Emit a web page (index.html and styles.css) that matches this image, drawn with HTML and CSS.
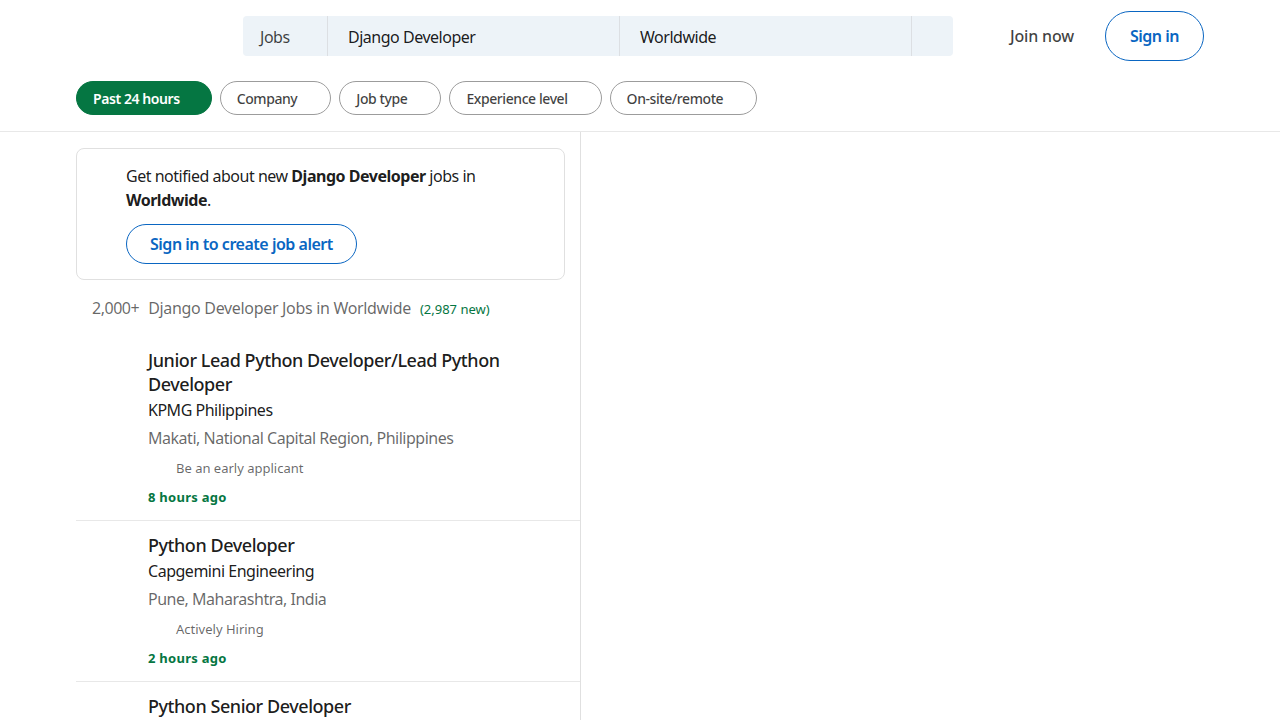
FILE: index.html
```html
<!DOCTYPE html>
<html lang="en">
<head>
<meta charset="utf-8">
<title>Django Developer Jobs in Worldwide</title>
<link rel="stylesheet" href="styles.css">
</head>
<body>
<header class="header">
  <div class="container top-row">
    <div class="search">
      <div class="search-seg seg-jobs">Jobs</div>
      <div class="search-seg seg-keyword">Django Developer</div>
      <div class="search-seg seg-location">Worldwide</div>
      <div class="search-seg seg-btn"></div>
    </div>
    <nav class="nav">
      <a class="join" href="#">Join now</a>
      <a class="signin" href="#">Sign in</a>
    </nav>
  </div>
  <div class="container filters">
    <button class="pill pill-active">Past 24 hours<span class="caret"></span></button>
    <button class="pill">Company<span class="caret"></span></button>
    <button class="pill">Job type<span class="caret"></span></button>
    <button class="pill">Experience level<span class="caret"></span></button>
    <button class="pill">On-site/remote<span class="caret"></span></button>
  </div>
</header>
<main class="container main">
  <section class="list">
    <div class="alert">
      <p class="alert-text">Get notified about new <strong>Django Developer</strong> jobs in <strong>Worldwide</strong>.</p>
      <button class="alert-btn">Sign in to create job alert</button>
    </div>
    <h1 class="results"><span class="count">2,000+</span><span class="results-title">Django Developer Jobs in Worldwide</span><span class="new">(2,987 new)</span></h1>
    <ul class="jobs">
      <li class="job">
        <div class="logo"></div>
        <div class="job-info">
          <h3 class="job-title">Junior Lead Python Developer/Lead Python Developer</h3>
          <h4 class="company">KPMG Philippines</h4>
          <div class="location">Makati, National Capital Region, Philippines</div>
          <div class="insight"><span class="insight-icon"></span>Be an early applicant</div>
          <div class="time">8 hours ago</div>
        </div>
      </li>
      <li class="job">
        <div class="logo"></div>
        <div class="job-info">
          <h3 class="job-title">Python Developer</h3>
          <h4 class="company">Capgemini Engineering</h4>
          <div class="location">Pune, Maharashtra, India</div>
          <div class="insight"><span class="insight-icon"></span>Actively Hiring</div>
          <div class="time">2 hours ago</div>
        </div>
      </li>
      <li class="job">
        <div class="logo"></div>
        <div class="job-info">
          <h3 class="job-title">Python Senior Developer</h3>
        </div>
      </li>
    </ul>
  </section>
  <section class="detail"></section>
</main>
</body>
</html>
```
FILE: styles.css
```css
* { box-sizing: border-box; letter-spacing: -0.03em; }
html, body { margin: 0; padding: 0; background: #fff; }
body {
  font-family: "Noto Sans", "Open Sans", Lato, "Liberation Sans", sans-serif;
  color: rgba(0,0,0,0.9);
  overflow: hidden;
  height: 720px;
}
.container { width: 1128px; margin: 0 auto; }
.header { border-bottom: 1px solid #e8e8e8; }
.top-row { height: 72px; display: flex; align-items: center; }
.search {
  margin-left: 167px;
  width: 710px;
  height: 40px;
  display: flex;
  background: #edf3f8;
  border-radius: 4px;
}
.search-seg {
  height: 40px;
  display: flex;
  align-items: center;
  padding-top: 1px;
  font-size: 16px;
  color: rgba(0,0,0,0.9);
  border-right: 1px solid #dcdfe3;
}
.seg-jobs { width: 85px; padding-left: 17px; color: rgba(0,0,0,0.75); }
.seg-keyword { width: 292px; padding-left: 20px; }
.seg-location { width: 292px; padding-left: 20px; }
.seg-btn { width: 41px; border-right: none; }
.nav { margin-left: auto; display: flex; align-items: center; }
.join {
  font-size: 16px;
  font-weight: 500;
  color: rgba(0,0,0,0.75);
  text-decoration: none;
  padding: 12px 31px 12px 24px;
  letter-spacing: -0.01em;
}
.signin {
  width: 99px;
  height: 50px;
  border: 1px solid #0a66c2;
  border-radius: 25px;
  display: flex;
  align-items: center;
  justify-content: center;
  color: #0a66c2;
  font-size: 16px;
  font-weight: 600;
  text-decoration: none;
}
.filters { display: flex; gap: 8px; padding: 9px 0 16px; }
.pill {
  height: 34px;
  border: 1px solid #9c9c9c;
  border-radius: 17px;
  background: #fff;
  font-family: inherit;
  font-size: 14px;
  font-weight: 500;
  color: rgba(0,0,0,0.75);
  padding: 0 16px 0 16px;
  display: flex;
  align-items: center;
}
.caret { display: inline-block; width: 17px; }
.pill-active { background: #057642; border-color: #057642; color: #fff; font-weight: 600; }
.pill-active .caret { width: 15px; }
.main { display: flex; }
.list { width: 505px; border-right: 1px solid #e0e0e0; padding-top: 16px; min-height: 600px; }
.alert {
  width: 489px;
  border: 1px solid #e0e0e0;
  border-radius: 8px;
  padding: 15px 24px 15px 49px;
}
.alert-text { margin: 0; font-size: 16px; line-height: 24px; color: rgba(0,0,0,0.9); }
.alert-text strong { font-weight: 700; }
.alert-btn {
  margin-top: 12px;
  height: 40px;
  padding: 0 23px;
  border: 1px solid #0a66c2;
  border-radius: 20px;
  background: #fff;
  color: #0a66c2;
  font-family: inherit;
  font-size: 16px;
  font-weight: 600;
}
.results {
  margin: 16px 0 0;
  padding-left: 16px;
  font-size: 16px;
  font-weight: 400;
  line-height: 24px;
  color: rgba(0,0,0,0.6);
  display: flex;
  align-items: baseline;
}
.count { margin-right: 9px; }
.results-title { letter-spacing: -0.02em; }
.new { font-size: 13px; color: #057642; margin-left: 9px; letter-spacing: 0; }
.jobs { list-style: none; margin: 15px 0 0; padding: 0; }
.job { display: flex; padding: 12px 16px 13px 0; border-bottom: 1px solid #e8e8e8; }
.logo { width: 72px; flex: none; }
.job-info { flex: 1; }
.job-title { margin: 0; font-size: 18px; font-weight: 500; line-height: 24px; color: rgba(0,0,0,0.9); letter-spacing: -0.025em; }
.company { margin: 2px 0 0; font-size: 16px; font-weight: 400; line-height: 24px; color: rgba(0,0,0,0.9); }
.location { margin-top: 4px; font-size: 16px; line-height: 24px; color: rgba(0,0,0,0.6); }
.insight { margin-top: 8px; font-size: 13px; line-height: 20px; color: rgba(0,0,0,0.6); display: flex; align-items: center; letter-spacing: 0; }
.insight-icon { width: 16px; height: 16px; margin-right: 12px; }
.time { margin-top: 9px; font-size: 13px; line-height: 20px; font-weight: 700; color: #057642; letter-spacing: 0.02em; }
.detail { flex: 1; }
```
